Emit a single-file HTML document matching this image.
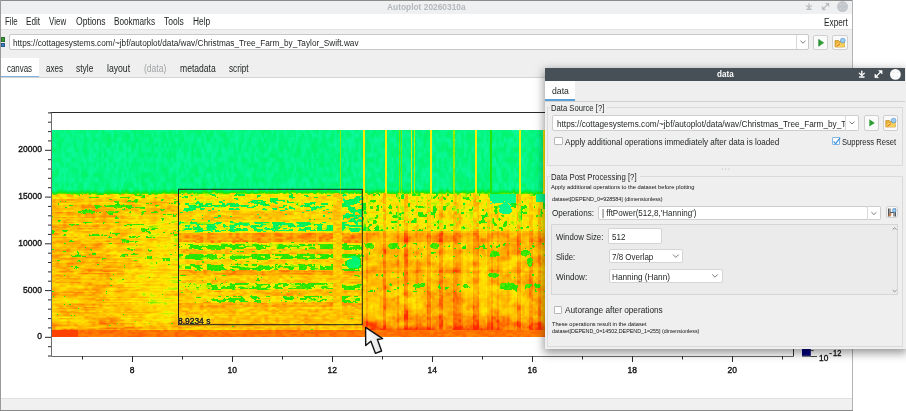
<!DOCTYPE html>
<html><head><meta charset="utf-8">
<style>
html,body{margin:0;padding:0;}
body{width:906px;height:411px;overflow:hidden;position:relative;background:#fff;font-family:"Liberation Sans",sans-serif;}
.a{position:absolute;box-sizing:border-box;}
.t{position:absolute;white-space:pre;line-height:1.149;transform-origin:0 0;font-family:"Liberation Sans",sans-serif;}
.clipurl{}
.sb{-webkit-text-stroke:0.35px #111;}
.halo{text-shadow:0 0 1.5px rgba(255,255,255,0.9);}
</style></head><body>
<!-- main window -->
<div class="a" style="left:0;top:0;width:853px;height:411px;background:#efefef;"></div>
<div class="a" style="left:0;top:0;width:853px;height:1px;background:#8c8c8c;"></div>
<div class="a" style="left:0;top:0;width:1px;height:411px;background:#9a9a9a;"></div>
<div class="a" style="left:852px;top:0;width:1px;height:411px;background:#b4b4b4;"></div>
<div class="a" style="left:0;top:410px;width:853px;height:1px;background:#8a8a8a;"></div>
<!-- title bar -->
<div class="a" style="left:1px;top:1px;width:851px;height:12.6px;background:#eff0f1;"></div>
<!-- title icons -->
<svg class="a" style="left:800px;top:0;" width="52" height="14" viewBox="0 0 52 14">
 <g stroke="#b6babe" fill="none" stroke-linecap="round">
  <path d="M9 3.8 V8.2" stroke-width="1.3"/>
  <path d="M6.4 5.6 L9 7.6 L11.6 5.6" stroke-width="1.1"/>
  <path d="M7 9.2 H11" stroke-width="1.5"/>
 </g>
 <g fill="#b6babe" stroke="#b6babe">
  <path d="M23.6 8.4 L27.6 4.4" stroke-width="1.2"/>
  <path d="M22.2 9.8 L22.2 6.4 L25.6 9.8 Z" stroke-width="0.5"/>
  <path d="M29 3.2 L29 6.6 L25.6 3.2 Z" stroke-width="0.5"/>
 </g>
 <circle cx="42.5" cy="6.6" r="5.5" fill="#c3c7cb"/>
 <g fill="#dfe2e5"><circle cx="40.3" cy="4.4" r="0.55"/><circle cx="44.7" cy="4.4" r="0.55"/><circle cx="40.3" cy="8.8" r="0.55"/><circle cx="44.7" cy="8.8" r="0.55"/></g>
</svg>
<!-- menu bar -->
<div class="a" style="left:1px;top:13.6px;width:851px;height:15.4px;background:#ffffff;"></div>
<div class="a" style="left:1px;top:29px;width:851px;height:1px;background:#e3e3e3;"></div>
<!-- url row -->
<div class="a" style="left:1px;top:37px;width:4px;height:5px;background:#3c9a3c;border:1px solid #2a6e2a;"></div>
<div class="a" style="left:1px;top:43px;width:4px;height:4px;background:#3b7fc4;border:1px solid #285a8e;"></div>
<div class="a" style="left:8.7px;top:33.5px;width:800.6px;height:16.5px;background:#fff;border:1px solid #c8c8c8;border-radius:2px;"></div>
<div class="a" style="left:795.5px;top:34.5px;width:1px;height:14.5px;background:#d8d8d8;"></div>
<svg class="a" style="left:797px;top:35px;" width="12" height="14"><path d="M3.5 5.8 L6 8.2 L8.5 5.8" stroke="#6b6e70" stroke-width="0.9" fill="none"/></svg>
<div class="a" style="left:813.2px;top:34.6px;width:15.3px;height:15.4px;background:#fafafa;border:1px solid #cfcfcf;border-radius:2px;"></div>
<svg class="a" style="left:813px;top:34.6px;" width="16" height="16"><path d="M5.8 4.2 L11.2 7.8 L5.8 11.4 Z" fill="#2f9e37"/><path d="M5.8 4.2 L5.8 11.4" stroke="#1f7a27" stroke-width="0.8"/></svg>
<div class="a" style="left:832.4px;top:34.6px;width:15.4px;height:15.4px;background:#fafafa;border:1px solid #cfcfcf;border-radius:2px;"></div>
<svg class="a" style="left:832.4px;top:34.6px;" width="16" height="16">
 <path d="M3 5.5 H6.5 L7.5 6.5 H12.5 V12 H3 Z" fill="#e8b23a" stroke="#b57f14" stroke-width="0.6"/>
 <path d="M3.2 12 L5 8 H13.2 L12.2 12 Z" fill="#f6cf5a"/>
 <circle cx="10.8" cy="5.6" r="2.4" fill="#9ccbf0" stroke="#4d8fd0" stroke-width="0.6"/>
 <path d="M4.5 11.5 L8 8.7" stroke="#e25d1b" stroke-width="1"/>
</svg>
<!-- tabs -->
<div class="a" style="left:1px;top:58px;width:37.7px;height:19.5px;background:#ffffff;"></div>
<div class="a" style="left:1px;top:76px;width:37.7px;height:1.5px;background:#7fb0dd;"></div>
<div class="a" style="left:1px;top:77.4px;width:851px;height:1px;background:#d3d3d3;"></div>
<!-- canvas -->
<div class="a" style="left:1px;top:78.4px;width:851px;height:319.6px;background:#ffffff;"></div>
<div class="a" style="left:1px;top:398px;width:851px;height:1px;background:#e0e0e0;"></div>
<div class="a" style="left:1px;top:399px;width:851px;height:11px;background:#f0f0f0;"></div>

<!-- spectrogram -->
<div class="a" style="left:51px;top:130px;width:742px;height:207px;background:linear-gradient(#00f38a 0,#00f38a 30%,#ffc21a 31%,#ffb300 94%,#ff6a00 95%);"></div>
<div class="a" style="left:179px;top:194px;width:183px;height:135px;background:linear-gradient(rgba(0,0,0,0) 0,rgba(0,0,0,0) 9px,rgba(60,225,60,.7) 9px,rgba(60,225,60,.7) 13px,rgba(0,0,0,0) 13px,rgba(0,0,0,0) 28px,rgba(0,240,120,.8) 28px,rgba(0,240,120,.8) 37px,rgba(255,120,0,.8) 39px,rgba(255,120,0,.8) 48px,rgba(0,0,0,0) 48px,rgba(0,0,0,0) 50px,rgba(40,225,0,.75) 50px,rgba(40,225,0,.75) 55px,rgba(0,0,0,0) 55px,rgba(0,0,0,0) 60px,rgba(40,225,0,.75) 60px,rgba(40,225,0,.75) 65px,rgba(0,0,0,0) 65px,rgba(0,0,0,0) 70px,rgba(40,225,0,.75) 70px,rgba(40,225,0,.75) 76px,rgba(0,0,0,0) 76px,rgba(0,0,0,0) 89px,rgba(40,225,0,.75) 89px,rgba(40,225,0,.75) 95px,rgba(0,0,0,0) 95px,rgba(0,0,0,0) 102px,rgba(40,225,0,.6) 102px,rgba(40,225,0,.6) 108px,rgba(0,0,0,0) 108px);"></div>
<canvas id="spec" class="a" width="494" height="207" style="left:51px;top:130px;width:494px;height:207px;"></canvas>

<!-- axes -->
<svg class="a" style="left:0;top:0;" width="906" height="411">
 <g fill="none" stroke="#1e1e1e" stroke-width="1">
  <path d="M50.5 112.5 H793.5" stroke="#2a2a2a"/><path d="M793.5 112.5 V356.5" stroke="#333"/><path d="M51.5 112.5 V356.5 H793.5" stroke="#6a6a6a"/>
 </g>
 <path stroke="#2a2a2a" stroke-width="1" fill="none" d="M48 356.0 H51 M48 346.7 H51 M45 337.3 H51 M48 327.9 H51 M48 318.6 H51 M48 309.2 H51 M48 299.9 H51 M45 290.6 H51 M48 281.2 H51 M48 271.9 H51 M48 262.5 H51 M48 253.2 H51 M45 243.8 H51 M48 234.4 H51 M48 225.1 H51 M48 215.8 H51 M48 206.4 H51 M45 197.1 H51 M48 187.7 H51 M48 178.3 H51 M48 169.0 H51 M48 159.7 H51 M45 150.3 H51 M48 140.9 H51 M48 131.6 H51 M48 122.2 H51 M48 112.9 H51 M82.5 356 V359.5 M132.5 356 V362 M182.5 356 V359.5 M232.5 356 V362 M282.5 356 V359.5 M332.5 356 V362 M382.5 356 V359.5 M432.5 356 V362 M482.5 356 V359.5 M532.5 356 V362 M582.5 356 V359.5 M632.5 356 V362 M682.5 356 V359.5 M732.5 356 V362 M782.5 356 V359.5"/>
 <rect x="178.5" y="189.3" width="183.8" height="135.4" fill="none" stroke="#202020" stroke-width="1"/>
 <rect x="802" y="340" width="8.8" height="15.8" fill="#000080"/><path d="M802 356.2 H810.8" stroke="#111" stroke-width="0.8"/>
 <path d="M810.6 356.5 H817 M810.6 350.6 H813.6" stroke="#333" stroke-width="0.9"/><path d="M829.3 353.6 H831.8" stroke="#222" stroke-width="1"/>
</svg>

<div class="t" style="left:387.00px;top:2.31px;font-size:9px;font-weight:bold;color:#b4b8bc;margin-left:-0.36px;transform:scaleX(0.930);">Autoplot 20260310a</div>
<div class="t" style="left:4.90px;top:16.29px;font-size:10px;font-weight:normal;color:#232627;margin-left:-0.40px;transform:scaleX(0.790);">File</div>
<div class="t" style="left:26.20px;top:16.29px;font-size:10px;font-weight:normal;color:#232627;margin-left:-0.40px;transform:scaleX(0.815);">Edit</div>
<div class="t" style="left:49.80px;top:16.29px;font-size:10px;font-weight:normal;color:#232627;margin-left:-0.40px;transform:scaleX(0.797);">View</div>
<div class="t" style="left:76.00px;top:16.29px;font-size:10px;font-weight:normal;color:#232627;margin-left:-0.40px;transform:scaleX(0.861);">Options</div>
<div class="t" style="left:114.60px;top:16.29px;font-size:10px;font-weight:normal;color:#232627;margin-left:-0.40px;transform:scaleX(0.821);">Bookmarks</div>
<div class="t" style="left:164.60px;top:16.29px;font-size:10px;font-weight:normal;color:#232627;margin-left:-0.40px;transform:scaleX(0.851);">Tools</div>
<div class="t" style="left:193.50px;top:16.29px;font-size:10px;font-weight:normal;color:#232627;margin-left:-0.40px;transform:scaleX(0.834);">Help</div>
<div class="t" style="left:824.60px;top:16.59px;font-size:10px;font-weight:normal;color:#232627;margin-left:-0.40px;transform:scaleX(0.825);">Expert</div>
<div class="t" style="left:12.90px;top:36.77px;font-size:9.7px;font-weight:normal;color:#232627;margin-left:-0.39px;transform:scaleX(0.849);">https://cottagesystems.com/~jbf/autoplot/data/wav/Christmas_Tree_Farm_by_Taylor_Swift.wav</div>
<div class="t" style="left:7.20px;top:62.89px;font-size:10px;font-weight:normal;color:#232627;margin-left:-0.40px;transform:scaleX(0.790);">canvas</div>
<div class="t" style="left:45.90px;top:62.89px;font-size:10px;font-weight:normal;color:#232627;margin-left:-0.40px;transform:scaleX(0.807);">axes</div>
<div class="t" style="left:76.60px;top:62.89px;font-size:10px;font-weight:normal;color:#232627;margin-left:-0.40px;transform:scaleX(0.845);">style</div>
<div class="t" style="left:107.60px;top:62.89px;font-size:10px;font-weight:normal;color:#232627;margin-left:-0.40px;transform:scaleX(0.865);">layout</div>
<div class="t" style="left:144.30px;top:62.89px;font-size:10px;font-weight:normal;color:#a0a2a4;margin-left:-0.40px;transform:scaleX(0.853);">(data)</div>
<div class="t" style="left:180.20px;top:62.89px;font-size:10px;font-weight:normal;color:#232627;margin-left:-0.40px;transform:scaleX(0.856);">metadata</div>
<div class="t" style="left:229.60px;top:62.89px;font-size:10px;font-weight:normal;color:#232627;margin-left:-0.40px;transform:scaleX(0.818);">script</div>
<div class="t sb" style="left:37.17px;top:332.47px;font-size:8.5px;font-weight:normal;color:#111;">0</div>
<div class="t sb" style="left:22.98px;top:285.72px;font-size:8.5px;font-weight:normal;color:#111;">5000</div>
<div class="t sb" style="left:18.26px;top:238.97px;font-size:8.5px;font-weight:normal;color:#111;">10000</div>
<div class="t sb" style="left:18.26px;top:192.22px;font-size:8.5px;font-weight:normal;color:#111;">15000</div>
<div class="t sb" style="left:18.26px;top:145.47px;font-size:8.5px;font-weight:normal;color:#111;">20000</div>
<div class="t sb" style="left:129.83px;top:365.77px;font-size:8.5px;font-weight:normal;color:#111;">8</div>
<div class="t sb" style="left:227.47px;top:365.77px;font-size:8.5px;font-weight:normal;color:#111;">10</div>
<div class="t sb" style="left:327.47px;top:365.77px;font-size:8.5px;font-weight:normal;color:#111;">12</div>
<div class="t sb" style="left:427.47px;top:365.77px;font-size:8.5px;font-weight:normal;color:#111;">14</div>
<div class="t sb" style="left:527.47px;top:365.77px;font-size:8.5px;font-weight:normal;color:#111;">16</div>
<div class="t sb" style="left:627.47px;top:365.77px;font-size:8.5px;font-weight:normal;color:#111;">18</div>
<div class="t sb" style="left:727.47px;top:365.77px;font-size:8.5px;font-weight:normal;color:#111;">20</div>
<div class="t sb halo" style="left:178.40px;top:316.97px;font-size:8.5px;font-weight:normal;color:#111;margin-left:-0.34px;transform:scaleX(0.992);">8.9234 s</div>
<div class="t sb" style="left:819.70px;top:354.07px;font-size:8.5px;font-weight:normal;color:#111;margin-left:-0.34px;transform:scaleX(0.979);">10</div>
<div class="t sb" style="left:833.00px;top:349.07px;font-size:8.5px;font-weight:normal;color:#111;margin-left:-0.34px;transform:scaleX(0.876);">12</div>

<!-- cursor -->
<svg class="a" style="left:360px;top:323px;" width="30" height="36" viewBox="0 0 30 36">
 <defs><linearGradient id="cg" x1="0" y1="0" x2="1" y2="0"><stop offset="0" stop-color="#fdfdfd"/><stop offset="1" stop-color="#e2e2e2"/></linearGradient></defs><path d="M5.6 4.3 L5.7 22.5 L10.9 18.2 L15.4 30.3 L21.6 28 L17.4 16.5 L22.6 15.6 Z" fill="url(#cg)" stroke="#111" stroke-width="1.4" stroke-linejoin="round"/>
</svg>

<!-- dialog -->
<div class="a" style="left:545px;top:68px;width:361px;height:281px;box-shadow:0 3px 9px 1px rgba(0,0,0,0.42);background:#efefef;"></div>
<div class="a" style="left:545px;top:68px;width:360px;height:12.8px;background:#475057;"></div>
<svg class="a" style="left:850px;top:64px;" width="56" height="22" viewBox="0 0 56 22">
 <g stroke="#ffffff" fill="none" stroke-linecap="round">
  <path d="M11.8 7.2 V11.8" stroke-width="1.3"/>
  <path d="M9.2 9.2 L11.8 11.2 L14.4 9.2" stroke-width="1.1"/>
  <path d="M9.6 13 H14" stroke-width="1.5"/>
 </g>
 <g fill="#ffffff" stroke="#ffffff">
  <path d="M26.4 12.2 L30.6 8" stroke-width="1.2"/>
  <path d="M24.9 13.7 L24.9 10.1 L28.5 13.7 Z" stroke-width="0.5"/>
  <path d="M32.1 6.5 L32.1 10.1 L28.5 6.5 Z" stroke-width="0.5"/>
 </g>
 <circle cx="45.4" cy="10.4" r="5.4" fill="#fbfbfb"/>
 <g fill="#d5d8db"><circle cx="43.2" cy="8.2" r="0.55"/><circle cx="47.6" cy="8.2" r="0.55"/><circle cx="43.2" cy="12.6" r="0.55"/><circle cx="47.6" cy="12.6" r="0.55"/></g>
</svg>
<div class="a" style="left:545px;top:80.8px;width:30px;height:20.2px;background:#ffffff;"></div>
<div class="a" style="left:545px;top:99.3px;width:30px;height:1.6px;background:#5a9fd6;"></div>
<div class="a" style="left:545px;top:101px;width:360px;height:1px;background:#d0d0d0;"></div>
<!-- group 1 -->
<div class="a" style="left:547.3px;top:107.3px;width:355.8px;height:59px;border:1px solid #dadada;"></div>
<div class="a" style="left:549.5px;top:104px;width:57px;height:7px;background:#efefef;"></div>
<div class="a" style="left:552px;top:115px;width:293.5px;height:15.5px;background:#fff;border:1px solid #cdcdcd;border-radius:2px;overflow:hidden;"></div>
<div class="a" style="left:845px;top:115px;width:14px;height:15.5px;background:#fff;border:1px solid #cdcdcd;border-left:1px solid #dadada;border-radius:0 2px 2px 0;"></div>
<svg class="a" style="left:845px;top:115px;" width="14" height="16"><path d="M4.5 6.6 L7 9 L9.5 6.6" stroke="#6b6e70" stroke-width="0.9" fill="none"/></svg>
<div class="a" style="left:864px;top:115px;width:14.5px;height:15.5px;background:#fafafa;border:1px solid #cfcfcf;border-radius:2px;"></div>
<svg class="a" style="left:864px;top:115px;" width="15" height="16"><path d="M5.3 4.3 L10.8 7.9 L5.3 11.5 Z" fill="#2f9e37"/></svg>
<div class="a" style="left:883px;top:115px;width:15px;height:15.5px;background:#fafafa;border:1px solid #cfcfcf;border-radius:2px;"></div>
<svg class="a" style="left:883px;top:115px;" width="16" height="16">
 <path d="M2.8 5.5 H6.3 L7.3 6.5 H12.3 V12 H2.8 Z" fill="#e8b23a" stroke="#b57f14" stroke-width="0.6"/>
 <path d="M3 12 L4.8 8 H13 L12 12 Z" fill="#f6cf5a"/>
 <circle cx="10.6" cy="5.6" r="2.4" fill="#9ccbf0" stroke="#4d8fd0" stroke-width="0.6"/>
 <path d="M4.3 11.5 L7.8 8.7" stroke="#e25d1b" stroke-width="1"/>
</svg>
<div class="a" style="left:554px;top:136.5px;width:8.5px;height:8.5px;background:#fff;border:1px solid #b8b8b8;border-radius:1px;"></div>
<div class="a" style="left:832px;top:136.5px;width:8px;height:8.2px;background:#fff;border:1px solid #86b7e3;border-radius:1px;"></div>
<svg class="a" style="left:831px;top:135px;" width="12" height="12"><path d="M2.6 6.4 L4.6 8.8 L9.2 2.6" stroke="#3d8fd8" stroke-width="1.2" fill="none"/></svg>
<!-- splitter dots -->
<svg class="a" style="left:718px;top:166px;" width="16" height="6"><g fill="#b0b0b0"><circle cx="4.2" cy="3" r="0.6"/><circle cx="7.6" cy="3" r="0.6"/><circle cx="11" cy="3" r="0.6"/></g></svg>
<!-- group 2 -->
<div class="a" style="left:547.3px;top:176.2px;width:355.8px;height:170.5px;border:1px solid #dadada;"></div>
<div class="a" style="left:549.5px;top:172px;width:90px;height:8px;background:#efefef;"></div>
<div class="a" style="left:597.9px;top:205.6px;width:270px;height:14.8px;background:#fff;border:1px solid #cdcdcd;border-radius:2px;"></div>
<div class="a" style="left:867.4px;top:205.6px;width:13.8px;height:14.8px;background:#fff;border:1px solid #cdcdcd;border-left:1px solid #dadada;border-radius:0 2px 2px 0;"></div>
<svg class="a" style="left:867.4px;top:205.6px;" width="14" height="15"><path d="M4.4 6.2 L6.9 8.6 L9.4 6.2" stroke="#6b6e70" stroke-width="0.9" fill="none"/></svg>
<div class="a" style="left:885.6px;top:205.5px;width:12px;height:12.8px;background:#fafafa;border:1px solid #d2d2d2;border-radius:2px;"></div>
<svg class="a" style="left:885.6px;top:205.5px;" width="12" height="13">
 <path d="M2.5 2.5 V10.5 M4 2.5 V10.5 M8 2.5 V10.5 M9.5 2.5 V10.5 M4 6.5 H8" stroke="#555" stroke-width="1.1"/>
 <circle cx="8.2" cy="4.4" r="1.9" fill="#8fc3ef" stroke="#4d8fd0" stroke-width="0.5"/>
 <path d="M2.6 10.2 L5.4 7.6" stroke="#e8701e" stroke-width="1.1"/>
</svg>
<!-- inner panel -->
<div class="a" style="left:551.4px;top:224.2px;width:346.6px;height:71.2px;background:#ebebeb;border:1px solid #d6d6d6;"></div>
<svg class="a" style="left:890px;top:225px;" width="8" height="70"><path d="M2.6 4.6 L4.6 2.8 L6.6 4.6" stroke="#777" stroke-width="0.8" fill="none"/><path d="M2.6 65 L4.6 66.8 L6.6 65" stroke="#777" stroke-width="0.8" fill="none"/></svg>
<div class="a" style="left:608.3px;top:228.2px;width:53.8px;height:16px;background:#fff;border:1px solid #d4d4d4;border-radius:2px;"></div>
<div class="a" style="left:608.5px;top:248.5px;width:74.2px;height:14.7px;background:#fff;border:1px solid #d4d4d4;border-radius:2px;"></div>
<svg class="a" style="left:670px;top:250px;" width="12" height="12"><path d="M3 4.6 L5.8 7.4 L8.6 4.6" stroke="#6b6e70" stroke-width="0.9" fill="none"/></svg>
<div class="a" style="left:608.5px;top:268.6px;width:114.8px;height:14.6px;background:#fff;border:1px solid #d4d4d4;border-radius:2px;"></div>
<svg class="a" style="left:709px;top:270px;" width="12" height="12"><path d="M3.2 4.4 L6 7.2 L8.8 4.4" stroke="#6b6e70" stroke-width="0.9" fill="none"/></svg>
<div class="a" style="left:554.3px;top:305.5px;width:8px;height:8px;background:#fff;border:1px solid #b8b8b8;border-radius:1px;"></div>

<div class="t" style="left:717.00px;top:68.91px;font-size:9px;font-weight:bold;color:#ffffff;margin-left:-0.36px;transform:scaleX(0.899);">data</div>
<div class="t" style="left:552.10px;top:86.11px;font-size:9px;font-weight:normal;color:#232627;margin-left:-0.36px;transform:scaleX(0.964);">data</div>
<div class="t" style="left:551.00px;top:103.31px;font-size:9px;font-weight:normal;color:#232627;margin-left:-0.36px;transform:scaleX(0.852);">Data Source [?]</div>
<div class="a" style="left:553px;top:116px;width:291.5px;height:13.5px;overflow:hidden;"><div style="position:absolute;left:-553px;top:-116px;width:906px;height:411px;"><div class="t clipurl" style="left:557.30px;top:117.87px;font-size:9.7px;font-weight:normal;color:#232627;margin-left:-0.39px;transform:scaleX(0.849);">https://cottagesystems.com/~jbf/autoplot/data/wav/Christmas_Tree_Farm_by_Taylor_Swift.wav</div></div></div>
<div class="t" style="left:565.00px;top:136.61px;font-size:9px;font-weight:normal;color:#232627;margin-left:-0.36px;transform:scaleX(0.902);">Apply additional operations immediately after data is loaded</div>
<div class="t" style="left:842.80px;top:136.61px;font-size:9px;font-weight:normal;color:#232627;margin-left:-0.36px;transform:scaleX(0.845);">Suppress Reset</div>
<div class="t" style="left:551.00px;top:171.91px;font-size:9px;font-weight:normal;color:#232627;margin-left:-0.36px;transform:scaleX(0.864);">Data Post Processing [?]</div>
<div class="t" style="left:551.00px;top:183.97px;font-size:6px;font-weight:normal;color:#111;margin-left:-0.24px;transform:scaleX(0.958);">Apply additional operations to the dataset before plotting</div>
<div class="t" style="left:552.00px;top:195.57px;font-size:6px;font-weight:normal;color:#111;margin-left:-0.24px;transform:scaleX(0.906);">dataset[DEPEND_0=928584] (dimensionless)</div>
<div class="t" style="left:552.70px;top:208.11px;font-size:9px;font-weight:normal;color:#232627;margin-left:-0.36px;transform:scaleX(0.902);">Operations:</div>
<div class="t" style="left:602.50px;top:208.11px;font-size:9px;font-weight:normal;color:#232627;margin-left:-0.36px;transform:scaleX(0.893);">| fftPower(512,8,'Hanning')</div>
<div class="t" style="left:556.50px;top:231.81px;font-size:9px;font-weight:normal;color:#232627;margin-left:-0.36px;transform:scaleX(0.868);">Window Size:</div>
<div class="t" style="left:612.70px;top:231.81px;font-size:9px;font-weight:normal;color:#232627;margin-left:-0.36px;transform:scaleX(0.894);">512</div>
<div class="t" style="left:556.50px;top:251.61px;font-size:9px;font-weight:normal;color:#232627;margin-left:-0.36px;transform:scaleX(0.853);">Slide:</div>
<div class="t" style="left:612.80px;top:251.61px;font-size:9px;font-weight:normal;color:#232627;margin-left:-0.36px;transform:scaleX(0.888);">7/8 Overlap</div>
<div class="t" style="left:556.50px;top:271.61px;font-size:9px;font-weight:normal;color:#232627;margin-left:-0.36px;transform:scaleX(0.905);">Window:</div>
<div class="t" style="left:612.80px;top:271.61px;font-size:9px;font-weight:normal;color:#232627;margin-left:-0.36px;transform:scaleX(0.912);">Hanning (Hann)</div>
<div class="t" style="left:564.90px;top:305.31px;font-size:9px;font-weight:normal;color:#232627;margin-left:-0.36px;transform:scaleX(0.917);">Autorange after operations</div>
<div class="t" style="left:552.00px;top:321.17px;font-size:6px;font-weight:normal;color:#111;margin-left:-0.24px;transform:scaleX(0.941);">These operations result in the dataset</div>
<div class="t" style="left:552.00px;top:328.37px;font-size:6px;font-weight:normal;color:#111;margin-left:-0.24px;transform:scaleX(0.891);">dataset[DEPEND_0=14502,DEPEND_1=255] (dimensionless)</div>

<script>
(function(){
var cv=document.getElementById('spec'); if(!cv||!cv.getContext) return;
var ctx=cv.getContext('2d'); var W=cv.width,H=cv.height;
var img=ctx.createImageData(W,H); var d=img.data;
function hash(i,j,s){var h=(i*374761393+j*668265263+s*2147483647)|0;h=(h^(h>>>13))*1274126177|0;h=h^(h>>>16);return ((h>>>0)%100000)/100000;}
function vnoise(x,y,s){var xi=Math.floor(x),yi=Math.floor(y),xf=x-xi,yf=y-yi;
 var a=hash(xi,yi,s),b=hash(xi+1,yi,s),c=hash(xi,yi+1,s),e=hash(xi+1,yi+1,s);
 var u=xf*xf*(3-2*xf),v=yf*yf*(3-2*yf);
 return (a*(1-u)+b*u)*(1-v)+(c*(1-u)+e*u)*v;}
var stops=[[0.00,15,250,168],[0.05,5,247,132],[0.14,0,240,60],[0.24,40,228,0],[0.36,170,238,0],[0.46,255,238,0],[0.58,255,208,0],[0.70,255,172,0],[0.82,255,128,0],[0.92,255,80,0],[1.0,255,40,0]];
function cmap(L){if(L<=0)return stops[0];if(L>=1)return stops[stops.length-1];
 for(var k=1;k<stops.length;k++){if(L<=stops[k][0]){var p=stops[k-1],q=stops[k];var f=(L-p[0])/(q[0]-p[0]);return [0,p[1]+(q[1]-p[1])*f,p[2]+(q[2]-p[2])*f,p[3]+(q[3]-p[3])*f];}}
 return stops[stops.length-1];}
var QT=[[0,0.1],[0.05,0.23],[0.1,0.284],[0.15,0.322],[0.2,0.354],[0.25,0.382],[0.3,0.408],[0.35,0.432],[0.4,0.456],[0.5,0.503],[0.6,0.549],[0.7,0.597],[0.8,0.650],[0.9,0.717],[1,0.9]];
function q(p){if(p<=0)return -1;for(var k=1;k<QT.length;k++){if(p<=QT[k][0]){var a=QT[k-1],b=QT[k];return a[1]+(b[1]-a[1])*(p-a[0])/(b[0]-a[0]);}}return 2;}
var BB=[
 [193.8,199.5,0.50,0.12,0.10],
 [199.5,203,0.52,0.18,0.08],
 [203,207,0.50,0.50,0.08],
 [207,211,0.50,0.22,0.06],
 [211,222,0.60,0.06,0.08],
 [222,231.5,0.45,0.62,0.06],
 [231.5,233,0.50,0.03,0.2],
 [233,242.5,0.84,-1,0],
 [242.5,244.5,0.50,0.05,0.2],
 [244.5,249.5,0.45,0.65,0.20],
 [249.5,254,0.62,0.03,0.2],
 [254,259.5,0.45,0.68,0.20],
 [259.5,264.5,0.58,0.03,0.2],
 [264.5,270.5,0.45,0.68,0.20],
 [270.5,275,0.72,0.0,0.2],
 [275,283.5,0.60,0.03,0.2],
 [283.5,289.5,0.45,0.65,0.20],
 [289.5,296,0.62,0.03,0.2],
 [296,302.5,0.50,0.50,0.20],
 [302.5,307,0.70,0.0,0.2],
 [307,329.5,0.63,0.004,0.2]
];
var VL=[[340.4,1,0.30],[363.7,2,0.45],[385.6,2,0.45],[400,1,0.28],[402,1,0.28],[412,1,0.40],[414.3,1,0.35],[430.3,2,0.45],[453.3,2,0.32],[475.2,2,0.45],[491,2,0.2],[519.7,2,0.42],[543.4,2,0.45]];
var VS=[[367,2,0.08],[384.6,3,0.16],[398,2,0.1],[405.8,3,0.16],[417,2,0.06],[429,3,0.15],[440.8,3,0.15],[455,3,0.14],[459,3,0.1],[476,5,0.16],[488.5,3,0.12],[492,2,0.1],[498,2,0.08],[508,2,0.06],[519,4,0.16],[531,3,0.12],[539.6,3,0.12]];
var VY=[[465,2,-0.12],[488,2,-0.12],[364,2,-0.12],[430.3,2,-0.1],[475.2,1.5,-0.08],[519.7,2,-0.1],[402,2,-0.08],[413,2,-0.08],[512,2,-0.08]];
function level(x,y){
 var n=vnoise(x/3.6,y/1.8,1), n2=vnoise(x/11,y/6,2), n3=vnoise(x/5.5,y/1.7,3), n4=vnoise(x/1.4,y/1.2,5);
 var m=0.7*n3+0.3*vnoise(x/2.2,y/1.3,7);
 var cut=193.8+(vnoise(x/3,0.5,4)-0.5)*2.2;
 if(x<178.5) cut+=0.6;
 if(y<cut){
  var cn=vnoise(x/1.8,0.3,9);
  var L=0.005+0.07*vnoise(x/2.5,y/5,11)+0.02*n4;
  var gz=4.5+3*cn;
  if(y>cut-gz){ var f=(y-(cut-gz))/gz; L+=0.26*f*f*(0.7+0.6*cn); }
  for(var k=0;k<VL.length;k++){var v=VL[k]; if(x>=v[0]-0.5 && x<v[0]-0.5+v[1]) L=v[2]+0.05*n;}
  return L;
 }
 var L;
 if(y>=330.2){
  L=0.85+0.1*(n-0.5);
  if(x<78) L=0.95;
    return L;
 }
 if(x<178.5){
  var st=vnoise(x/22,y/1.25,21);
  L=0.62+0.20*(n-0.5)+0.22*(st-0.5)+0.16*(n2-0.5);
  if(x>110) L-=0.10*Math.min(1,(x-110)/45)*(y>215?1:0.4);
  if(x<110 && y>205 && y<300) L+=0.03;
  var ma=0.8*vnoise(x/6.5,y/2.1,23)+0.2*n4;
  var gp = y<215?0.10:(y<262?0.06:0.01);
  if(y<199) {L=0.58+0.32*(n-0.5);}
  if(ma<q(gp)) L=0.2+0.1*n4;
  if(y>306&&y<309.5&&x<86&&n>0.3) L+=0.08;
  if(y>315) L+=0.1*(y-315)/14.5;
 } else if(x<362.5){
  var w=(vnoise(x/9,3.3,8)-0.5)*1.4;
  var yy=y+w;
  var b=null;
  for(var k=0;k<BB.length;k++){if(yy>=BB[k][0]&&yy<BB[k][1]){b=BB[k];break;}}
  if(!b) b=[0,0,0.62,0.05,0.2];
  if(b[3]<0){ L=0.77+0.22*(n-0.5)+0.08*(n2-0.5);
    var ph=((x-182.5)%22.5+22.5)%22.5; if(ph<1.8||ph>20.7) L=0.70+0.1*(n-0.5); }
  else { var st=vnoise(x/20,y/1.2,22); L=b[2]+0.22*(n-0.5)+0.12*(st-0.5)+0.08*(n2-0.5); var pp=b[3]; var ph2=((x-182.5)%22.5+22.5)%22.5; if(pp>0.3&&(ph2<2.5||ph2>20)) pp*=0.45; if(m<q(pp)) L=b[4]+0.08*n4; }
  if(x>=343&&y<222&&m<q(0.55)) L=0.05+0.1*n4;
  if(x>=333&&x<342){ L=0.6+0.22*(n-0.5); }
  if(x>=344&&x<363&&y>=253&&y<272){var dx=(x-353.5)/8.5,dy=(y-262.3)/8; var rr=Math.max(Math.abs(dx),Math.abs(dy))*0.6+Math.sqrt(dx*dx+dy*dy)*0.4; if(rr+0.5*(m-0.5)<0.95) L=(rr<0.75?0.05:0.2)+0.05*n4; if(dx<-0.2&&dy<-0.3&&m>0.62) L=0.45;}
  if(x<195&&yy>=295.5&&yy<303) L=0.6+0.2*(n-0.5);
  if(x<206&&yy>=283&&yy<290&&m<0.55) L=0.42;
 } else {
  m=0.7*vnoise(x/2.6,y/3.2,13)+0.3*vnoise(x/1.5,y/1.5,14); n=0.6*vnoise(x/2.2,y/3,15)+0.4*n;
  if(y<231){ L=0.50+0.3*(n-0.5)+0.16*(n2-0.5); var gp=0.2; if(x<385) gp=0.3; var mb=0.65*vnoise(x/3.2,y/3,33)+0.35*m; if(mb<q(gp)) L=0.18+0.1*n4; }
  else { L=0.63+0.20*(n-0.5)+0.26*(n2-0.5); if(y>=233&&y<242.5) L+=0.08; }
  for(var k=0;k<VS.length;k++){ var d=Math.abs(x-VS[k][0]); if(d<VS[k][1]/2+0.3) L+=VS[k][2]*(0.8+0.4*vnoise(x,y/4,31)); }
  for(var k=0;k<VY.length;k++){ var d=Math.abs(x-VY[k][0]); if(d<VY[k][1]) L+=0.45*VY[k][2]; }
  if(y>312) L+=0.24*(y-312)/18;
  if(y>=243&&y<249&&m<q(0.10)) L=0.22;
  if(y>=252&&y<257&&m<q(0.06)) L=0.22;
  if(y>=272&&y<278&&m<q(0.05)) L=0.22;
  if(y>=283&&y<292&&m<q(0.06)) L=0.22;
  if(y>=270.5&&y<273.5) L+=0.07;
  var GB=[[369.5,246,5,3],[393,246,5,3],[435,246,5,3],[495,254,5,3.5],[525,253,5,3],[530,262,3,5],[508,286.5,10,3.8],[418,286,6,2],[466,286,3,2],[528,286,3,2],[538,286,3,2.5],[493,275,6,2.5]];
  for(var k=0;k<GB.length;k++){var g=GB[k]; var dx=(x-g[0])/g[2], dy=(y-g[1])/g[3]; if(dx*dx+dy*dy+0.9*(m-0.5)<0.9) L=0.2+0.1*n4;}
  if(x>=490&&x<516&&y<203.5+2*(n-0.5)&&m<0.75) L=0.04;
  if(x>=536&&y<202+2*(n-0.5)) L=0.04;
  if(x>=499&&x<512&&y>=203&&y<214){var dx=(x-505.5)/6.5,dy=(y-208.5)/5.5; if(dx*dx+dy*dy+0.8*(m-0.5)<1.0) L=0.04;}
 }
 return L;
}

for(var j=0;j<H;j++){for(var i=0;i<W;i++){
 var L=level(i+51.5,j+130.5); var c=cmap(L); var o=(j*W+i)*4;
 d[o]=c[1];d[o+1]=c[2];d[o+2]=c[3];d[o+3]=255;}}
ctx.putImageData(img,0,0);
})();
</script>
</body></html>
